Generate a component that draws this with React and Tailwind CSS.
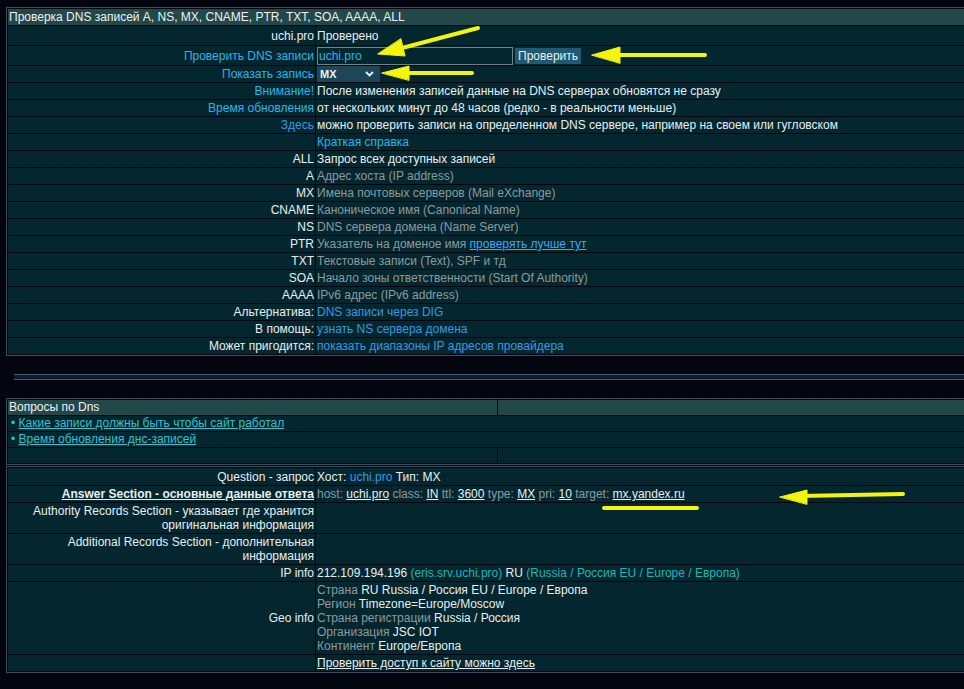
import React from 'react'

const white = 'text-[#e9eef0]'
const cyan = 'text-[#2db3e8]'
const blue = 'text-[#3a98e0]'
const gray = 'text-[#8c9a9e]'
const teal = 'text-[#22b4b4]'

const records = [
  { k: 'ALL', v: 'Запрос всех доступных записей', bright: true },
  { k: 'A', v: 'Адрес хоста (IP address)' },
  { k: 'MX', v: 'Имена почтовых серверов (Mail eXchange)' },
  { k: 'CNAME', v: 'Каноническое имя (Canonical Name)' },
  { k: 'NS', v: 'DNS сервера домена (Name Server)' },
  { k: 'PTR', v: 'Указатель на доменое имя ', link: 'проверять лучше тут' },
  { k: 'TXT', v: 'Текстовые записи (Text), SPF и тд' },
  { k: 'SOA', v: 'Начало зоны ответственности (Start Of Authority)' },
  { k: 'AAAA', v: 'IPv6 адрес (IPv6 address)' },
]

const extras = [
  { k: 'Альтернатива:', v: 'DNS записи через DIG' },
  { k: 'В помощь:', v: 'узнать NS сервера домена' },
  { k: 'Может пригодится:', v: 'показать диапазоны IP адресов провайдера' },
]

function Label({ children, className = '' }) {
  return <td className={`w-[307px] px-[1px] py-[1px] text-right align-middle bg-[#04272f] ${className}`}>{children}</td>
}

function Cell({ children, className = '' }) {
  return <td className={`px-[1px] py-[1px] align-middle bg-[#04272f] ${className}`}>{children}</td>
}

function Arrows() {
  return (
    <svg className="pointer-events-none absolute left-0 top-0" width="964" height="689">
      <g stroke="#f4f40c" strokeWidth="4" strokeLinecap="round" fill="#f4f40c">
        <line x1="478" y1="28" x2="402" y2="48" />
        <polygon points="378,54 405,56 401,39" strokeWidth="1" />
        <line x1="705" y1="55" x2="615" y2="55" />
        <polygon points="592,55 620,47 620,63" strokeWidth="1" />
        <line x1="472" y1="73" x2="405" y2="73" />
        <polygon points="382,73 409,66 409,80" strokeWidth="1" />
        <line x1="903" y1="494" x2="800" y2="496" />
        <polygon points="780,497 807,490 807,504" strokeWidth="1" />
        <line x1="604" y1="508" x2="697" y2="508" />
      </g>
    </svg>
  )
}

export default function App() {
  return (
    <div className="relative min-h-[689px] w-full overflow-hidden bg-[#03050f] font-['Liberation_Sans',Arial,sans-serif] text-[12px] leading-[14px] text-[#e9eef0]">
      {/* main check table */}
      <table className="ml-[6px] mt-[7px] w-[990px] border border-[#3c4c5a] border-separate border-spacing-[1px]">
        <tbody>
          <tr>
            <td colSpan={2} className="h-[16px] px-[1px] py-[1px] bg-[#22484a] text-[#eef2f2]">
              Проверка DNS записей A, NS, MX, CNAME, PTR, TXT, SOA, AAAA, ALL
            </td>
          </tr>
          <tr className="h-[19px]">
            <Label className={white}>uchi.pro</Label>
            <Cell className={white}>Проверено</Cell>
          </tr>
          <tr className="h-[19px]">
            <Label className={cyan}>Проверить DNS записи</Label>
            <td className="bg-[#04272f] px-[1px] py-0 align-middle">
              <div className="flex items-center gap-[2px]">
                <div className={`h-[18px] w-[196px] border border-[#6f8088] px-[1px] leading-[16px] ${cyan}`}>uchi.pro</div>
                <div className="h-[16px] bg-[#1f5a72] px-[3px] leading-[16px] text-[#e6eef0]">Проверить</div>
              </div>
            </td>
          </tr>
          <tr className="h-[16px]">
            <Label className={cyan}>Показать запись</Label>
            <td className="bg-[#04272f] px-[1px] py-0 align-middle">
              <div className="flex h-[16px] w-[63px] items-center justify-between bg-[#1d4658] pl-[3px] pr-[6px] font-bold text-[11px] text-[#eef2f4]">
                <span>MX</span>
                <svg width="9" height="6" viewBox="0 0 9 6">
                  <polyline points="1,1 4.5,4.5 8,1" fill="none" stroke="#eef2f4" strokeWidth="1.8" />
                </svg>
              </div>
            </td>
          </tr>
          <tr className="h-[16px]">
            <Label className={cyan}>Внимание!</Label>
            <Cell className={white}>После изменения записей данные на DNS серверах обновятся не сразу</Cell>
          </tr>
          <tr className="h-[16px]">
            <Label className={cyan}>Время обновления</Label>
            <Cell className={white}>от нескольких минут до 48 часов (редко - в реальности меньше)</Cell>
          </tr>
          <tr className="h-[16px]">
            <Label className={blue}>Здесь</Label>
            <Cell className={white}>можно проверить записи на определенном DNS сервере, например на своем или гугловском</Cell>
          </tr>
          <tr className="h-[16px]">
            <Label />
            <Cell className={cyan}>Краткая справка</Cell>
          </tr>
          {records.map((r) => (
            <tr key={r.k} className="h-[16px]">
              <Label className={white}>{r.k}</Label>
              <Cell className={r.bright ? white : gray}>
                {r.v}
                {r.link && <span className="text-[#4aa2f0] underline">{r.link}</span>}
              </Cell>
            </tr>
          ))}
          {extras.map((r) => (
            <tr key={r.k} className="h-[16px]">
              <Label className={white}>{r.k}</Label>
              <Cell className={blue}>{r.v}</Cell>
            </tr>
          ))}
        </tbody>
      </table>

      {/* separator */}
      <div className="ml-[14px] mt-[18px] h-[6px] w-[990px] border-y border-[#4a5a6c] bg-[#0b1a30]" />

      {/* questions */}
      <table className="ml-[6px] mt-[18px] w-[990px] border border-[#3c4c5a] border-separate border-spacing-[1px] leading-[15px]">
        <tbody>
          <tr className="h-[15px]">
            <td className="w-[489px] bg-[#22484a] px-[1px] text-[#eef2f2]">Вопросы по Dns</td>
            <td className="bg-[#22484a]" />
          </tr>
          <tr className="h-[15px]">
            <td colSpan={2} className="bg-[#04272f] px-[1px] text-[#38c0cc]">
              <span className="pl-[2px]">•</span> <span className="underline">Какие записи должны быть чтобы сайт работал</span>
            </td>
          </tr>
          <tr className="h-[15px]">
            <td colSpan={2} className="bg-[#04272f] px-[1px] text-[#38c0cc]">
              <span className="pl-[2px]">•</span> <span className="underline">Время обновления днс-записей</span>
            </td>
          </tr>
          <tr className="h-[15px]">
            <td className="w-[489px] bg-[#04272f]" />
            <td className="bg-[#04272f]" />
          </tr>
        </tbody>
      </table>

      {/* result */}
      <table className="ml-[6px] mt-[1px] w-[990px] border border-[#3c4c5a] border-separate border-spacing-[1px]">
        <tbody>
          <tr className="h-[17px]">
            <Label className={white}>Question - запрос</Label>
            <Cell className={white}>
              Хост: <span className={blue}>uchi.pro</span> Тип: MX
            </Cell>
          </tr>
          <tr className="h-[16px]">
            <Label className={`${white} font-bold underline`}>Answer Section - основные данные ответа</Label>
            <Cell className={gray}>
              host: <span className={`${white} underline`}>uchi.pro</span> class: <span className={`${white} underline`}>IN</span> ttl:{' '}
              <span className={`${white} underline`}>3600</span> type: <span className={`${white} underline`}>MX</span> pri:{' '}
              <span className={`${white} underline`}>10</span> target: <span className={`${white} underline`}>mx.yandex.ru</span>
            </Cell>
          </tr>
          <tr>
            <Label className={white}>
              Authority Records Section - указывает где хранится
              <br />
              оригинальная информация
            </Label>
            <Cell />
          </tr>
          <tr>
            <Label className={white}>
              Additional Records Section - дополнительная
              <br />
              информация
            </Label>
            <Cell />
          </tr>
          <tr className="h-[16px]">
            <Label className={white}>IP info</Label>
            <Cell className={white}>
              212.109.194.196 <span className={teal}>(eris.srv.uchi.pro)</span> RU{' '}
              <span className={teal}>(Russia / Россия EU / Europe / Европа)</span>
            </Cell>
          </tr>
          <tr>
            <Label className={white}>Geo info</Label>
            <Cell className={white}>
              <span className={gray}>Страна</span> RU Russia / Россия EU / Europe / Европа
              <br />
              <span className={gray}>Регион</span> Timezone=Europe/Moscow
              <br />
              <span className={gray}>Страна регистрации</span> Russia / Россия
              <br />
              <span className={gray}>Организация</span> JSC IOT
              <br />
              <span className={gray}>Континент</span> Europe/Европа
            </Cell>
          </tr>
          <tr className="h-[16px]">
            <Label />
            <Cell className={`${white} underline`}>Проверить доступ к сайту можно здесь</Cell>
          </tr>
        </tbody>
      </table>

      <Arrows />
    </div>
  )
}
